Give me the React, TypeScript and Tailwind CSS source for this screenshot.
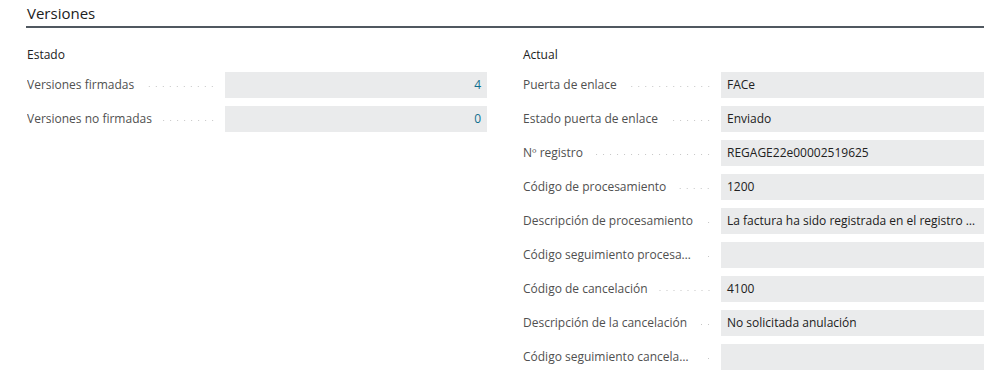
const LEFT_FIELDS = [
  { label: "Versiones firmadas", value: "4" },
  { label: "Versiones no firmadas", value: "0" },
];

const RIGHT_FIELDS = [
  { label: "Puerta de enlace", value: "FACe" },
  { label: "Estado puerta de enlace", value: "Enviado" },
  { label: "Nº registro", value: "REGAGE22e00002519625" },
  { label: "Código de procesamiento", value: "1200" },
  { label: "Descripción de procesamiento", value: "La factura ha sido registrada en el registro electrónico REC" },
  { label: "Código seguimiento procesamiento", value: "" },
  { label: "Código de cancelación", value: "4100" },
  { label: "Descripción de la cancelación", value: "No solicitada anulación" },
  { label: "Código seguimiento cancelación", value: "" },
];

function Field({ label, value, numeric }: { label: string; value: string; numeric?: boolean }) {
  return (
    <div className="flex items-center h-[26px] mb-2">
      {/* etiqueta + puntos */}
      <div className="w-[198px] shrink-0 flex items-center pr-[9px] min-w-0">
        <span className="truncate text-[#505050] max-w-[180px] pr-2.5 leading-[26px]">{label}</span>
        <span className="flex-1 min-w-0 h-px mt-[2px] bg-[radial-gradient(circle,#c6c6c6_0.6px,transparent_0.8px)] bg-[length:7px_1px] bg-repeat-x bg-[position:right_center]" />
      </div>
      {/* valor */}
      <div
        className={
          numeric
            ? "flex-1 min-w-0 h-full bg-[#eaebec] px-[6px] leading-[26px] text-right text-[#0f6f8f]"
            : "flex-1 min-w-0 h-full bg-[#eaebec] px-[6px] leading-[26px] text-[#212121] truncate"
        }
      >
        {value}
      </div>
    </div>
  );
}

export default function App() {
  return (
    <div
      className="bg-white w-[992px] h-[382px] overflow-hidden pl-[26px] pr-[8px] text-[12px]"
      style={{ fontFamily: '"Open Sans", "Noto Sans", sans-serif' }}
    >
      {/* cabecera */}
      <div className="border-b-2 border-[#505860] h-[28px] pt-[3px]">
        <h2 className="text-[15px] leading-[20px] text-[#212121] pl-px">Versiones</h2>
      </div>

      <div className="grid grid-cols-2 gap-x-[36px] pt-[17px]">
        <div className="pl-px">
          <p className="text-[#212121] leading-[20px] mb-[7px]">Estado</p>
          {LEFT_FIELDS.map((f) => (
            <Field key={f.label} label={f.label} value={f.value} numeric />
          ))}
        </div>
        <div>
          <p className="text-[#212121] leading-[20px] mb-[7px]">Actual</p>
          {RIGHT_FIELDS.map((f) => (
            <Field key={f.label} label={f.label} value={f.value} />
          ))}
        </div>
      </div>
    </div>
  );
}
